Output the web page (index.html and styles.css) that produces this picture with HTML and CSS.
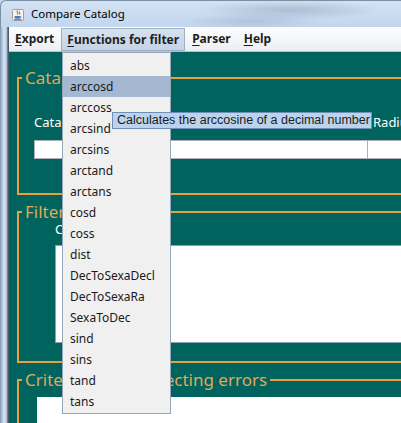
FILE: index.html
```html
<!DOCTYPE html>
<html>
<head>
<meta charset="utf-8">
<link rel="stylesheet" href="styles.css">
</head>
<body>
<div class="window">
  <div class="titlebar">
    <svg class="app-icon" width="12" height="12" viewBox="0 0 12 12">
      <rect x="0.5" y="0.5" width="11" height="11" rx="1" fill="#f2f2f2" stroke="#a0a0a0"/>
      <path d="M5.5 1.5c-1.6 1.4 1.4 2.2 0 4.2M7.6 2.3c-1.1 1 1.1 1.7 0 3.2" stroke="#e2672c" stroke-width="1.1" fill="none"/>
      <path d="M2.6 7h5.6v1.2c0 .9-.8 1.6-1.6 1.6H4.2c-.9 0-1.6-.7-1.6-1.6z" fill="#4d7bb6"/>
      <path d="M8.2 7.4c1.2 0 1.2 1.6 0 1.6" stroke="#4d7bb6" stroke-width="0.9" fill="none"/>
      <path d="M2 10.6h7.6" stroke="#4d7bb6" stroke-width="0.9"/>
    </svg>
    <span class="title">Compare Catalog</span>
  </div>
  <div class="frame">
    <div class="frame-left"></div>
    <div class="main">
      <div class="menubar">
        <div class="menu-item"><u>E</u>xport</div>
        <div class="menu-item active"><u>F</u>unctions for filter</div>
        <div class="menu-item"><u>P</u>arser</div>
        <div class="menu-item"><u>H</u>elp</div>
      </div>
      <div class="content">
        <fieldset class="panel">
          <legend>Catalog</legend>
          <div class="cat-grid">
            <div class="label">Catalog</div>
            <div class="label label-right">Radius</div>
            <div class="field field-first"></div>
            <div class="field field-second"></div>
          </div>
        </fieldset>
        <fieldset class="panel panel-gap">
          <legend>Filter</legend>
          <div class="filter-body">
            <div class="label label-tight">Condition</div>
            <div class="textarea"></div>
          </div>
        </fieldset>
        <fieldset class="panel panel-gap panel-last">
          <legend>Criteria for all detecting errors</legend>
          <div class="criteria-table"></div>
        </fieldset>
      </div>
    </div>
  </div>

  <div class="dropdown">
    <div class="dd-item">abs</div>
    <div class="dd-item selected">arccosd</div>
    <div class="dd-item">arccoss</div>
    <div class="dd-item">arcsind</div>
    <div class="dd-item">arcsins</div>
    <div class="dd-item">arctand</div>
    <div class="dd-item">arctans</div>
    <div class="dd-item">cosd</div>
    <div class="dd-item">coss</div>
    <div class="dd-item">dist</div>
    <div class="dd-item">DecToSexaDecl</div>
    <div class="dd-item">DecToSexaRa</div>
    <div class="dd-item">SexaToDec</div>
    <div class="dd-item">sind</div>
    <div class="dd-item">sins</div>
    <div class="dd-item">tand</div>
    <div class="dd-item">tans</div>
  </div>

  <div class="tooltip">Calculates the arccosine of a decimal number</div>
</div>
</body>
</html>
```

FILE: styles.css
```css
* { box-sizing: border-box; }
html, body { margin: 0; padding: 0; }
body {
  width: 401px;
  height: 423px;
  overflow: hidden;
  background: #ffffff;
  font-family: "Noto Sans", "DejaVu Sans", sans-serif;
}
.window {
  position: relative;
  width: 401px;
  height: 423px;
  overflow: hidden;
  display: flex;
  flex-direction: column;
  background: #c6d8ec;
}
.titlebar {
  height: 27px;
  flex: none;
  display: flex;
  align-items: center;
  padding-left: 11px;
  gap: 7px;
  border-top-left-radius: 6px;
  border-top: 1px solid #7d8fa3;
  border-left: 1px solid #7d8fa3;
  background:
    radial-gradient(ellipse 90px 10px at 290px 9px, rgba(110,130,160,0.35), rgba(110,130,160,0) 100%),
    radial-gradient(ellipse 70px 8px at 250px 20px, rgba(110,130,160,0.25), rgba(110,130,160,0) 100%),
    linear-gradient(to bottom, #d3e2f3, #c2d6ee);
}
.app-icon { flex: none; margin-top: 1px; }
.title {
  font-size: 11.5px;
  color: #000;
  line-height: 14px;
}
.frame {
  flex: 1;
  display: flex;
  min-height: 0;
}
.frame-left {
  width: 9px;
  flex: none;
  background: linear-gradient(to right, #7f93a8 0, #aec4dc 2px, #d2e3f4 4px, #c4d6ea 6px, #9aaabb 7px, #4c5a69 8px, #4c5a69 9px);
}
.main {
  flex: 1;
  display: flex;
  flex-direction: column;
  min-width: 0;
}
.menubar {
  height: 25px;
  flex: none;
  display: flex;
  align-items: stretch;
  background: linear-gradient(to bottom, #fdfdfe 0, #f3f5f8 60%, #eaedf2 100%);
  border-bottom: 1px solid #b9c2cc;
}
.menu-item {
  display: flex;
  align-items: center;
  padding: 0 6px;
  margin-right: 1px;
  font-size: 12px;
  font-weight: 700;
  color: #1e1e1e;
  line-height: 16px;
}
.menu-item u { text-decoration-thickness: 1px; text-underline-offset: 2px; }
.menu-item.active {
  padding: 0 5px;
  margin: 1px 1px 0 0;
  border: 1px solid #9eb0c6;
  background: linear-gradient(to bottom, #d7e1ee, #c5d3e5);
}
.content {
  flex: 1;
  background: #01635e;
  padding: 17px 0 0 8px;
}
.panel {
  margin: 0;
  width: 470px;
  min-width: 0;
  border: 2px solid #e8a03e;
  padding: 0 0 0 3px;
}
.panel legend {
  padding: 0 3px;
  font-size: 17px;
  line-height: 18px;
  color: #dfa95a;
}
.panel-gap { margin-top: 8px; }
.panel-last { border-bottom: none; }
.cat-grid {
  display: grid;
  grid-template-columns: 334px 1fr;
  row-gap: 9px;
  margin: 26px 0 34px 12px;
}
.label {
  font-size: 13px;
  line-height: 18px;
  color: #ffffff;
  white-space: nowrap;
}
.label-right { padding-left: 5px; }
.label-tight { line-height: 16px; }
.field {
  height: 19px;
  background: #ffffff;
  border: 1px solid #a9b2bc;
}
.field-second { border-left: none; }
.filter-body {
  margin: 0 0 18px 33px;
}
.textarea {
  margin-top: 8px;
  height: 98px;
  background: #ffffff;
  border-top: 1px solid #8fa0b4;
  border-bottom: 1px solid #8fa0b4;
  border-left: 1px solid #8fa0b4;
}
.criteria-table {
  margin: 8px 0 0 15px;
  height: 120px;
  background: #ffffff;
}
.dropdown {
  position: absolute;
  left: 62px;
  top: 52px;
  width: 109px;
  padding: 2px 0 1px;
  background: #f0f0f0;
  border: 1px solid #97a7bb;
}
.dd-item {
  height: 21px;
  line-height: 21px;
  padding-left: 7px;
  font-size: 12px;
  color: #1a1a1a;
  white-space: nowrap;
}
.dd-item.selected {
  background: #a5b8d2;
}
.tooltip {
  position: absolute;
  left: 112px;
  top: 112px;
  width: 260px;
  height: 17px;
  padding-left: 4px;
  background: #bcd3ec;
  border: 1px solid #6f8fb6;
  font-family: "Liberation Sans", Arial, sans-serif;
  font-size: 12.5px;
  line-height: 15px;
  color: #1c1c1c;
  white-space: nowrap;
}
```
